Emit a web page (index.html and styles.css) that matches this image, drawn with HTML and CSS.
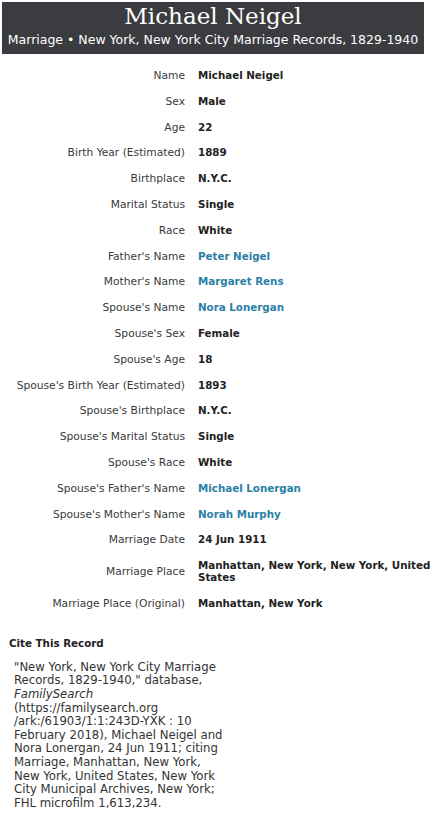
FILE: index.html
```html
<!DOCTYPE html>
<html>
<head>
<meta charset="utf-8">
<link rel="stylesheet" href="styles.css">
</head>
<body>
<header class="hdr">
  <h1 class="title">Michael Neigel</h1>
  <div class="sub">Marriage • New York, New York City Marriage Records, 1829-1940</div>
</header>
<table class="facts">
  <tr><th>Name</th><td>Michael Neigel</td></tr>
  <tr><th>Sex</th><td>Male</td></tr>
  <tr><th>Age</th><td>22</td></tr>
  <tr><th>Birth Year (Estimated)</th><td>1889</td></tr>
  <tr><th>Birthplace</th><td>N.Y.C.</td></tr>
  <tr><th>Marital Status</th><td>Single</td></tr>
  <tr><th>Race</th><td>White</td></tr>
  <tr><th>Father's Name</th><td><a class="lnk" href="#">Peter Neigel</a></td></tr>
  <tr><th>Mother's Name</th><td><a class="lnk" href="#">Margaret Rens</a></td></tr>
  <tr><th>Spouse's Name</th><td><a class="lnk" href="#">Nora Lonergan</a></td></tr>
  <tr><th>Spouse's Sex</th><td>Female</td></tr>
  <tr><th>Spouse's Age</th><td>18</td></tr>
  <tr><th>Spouse's Birth Year (Estimated)</th><td>1893</td></tr>
  <tr><th>Spouse's Birthplace</th><td>N.Y.C.</td></tr>
  <tr><th>Spouse's Marital Status</th><td>Single</td></tr>
  <tr><th>Spouse's Race</th><td>White</td></tr>
  <tr><th>Spouse's Father's Name</th><td><a class="lnk" href="#">Michael Lonergan</a></td></tr>
  <tr><th>Spouse's Mother's Name</th><td><a class="lnk" href="#">Norah Murphy</a></td></tr>
  <tr><th>Marriage Date</th><td>24 Jun 1911</td></tr>
  <tr><th>Marriage Place</th><td>Manhattan, New York, New York, United States</td></tr>
  <tr><th>Marriage Place (Original)</th><td>Manhattan, New York</td></tr>
</table>
<section class="cite">
  <h2 class="cite-h">Cite This Record</h2>
  <p class="cite-p">"New York, New York City Marriage<br>Records, 1829-1940," database,<br><i>FamilySearch</i><br>(https://familysearch.org<br>/ark:/61903/1:1:243D-YXK : 10<br>February 2018), Michael Neigel and<br>Nora Lonergan, 24 Jun 1911; citing<br>Marriage, Manhattan, New York,<br>New York, United States, New York<br>City Municipal Archives, New York;<br>FHL microfilm 1,613,234.</p>
</section>
</body>
</html>
```

FILE: styles.css
```css
body {
  margin: 0;
  background: #fff;
  font-family: "DejaVu Sans", Verdana, sans-serif;
  color: #333;
}
.hdr {
  margin: 2px 13px 0 2px;
  background: #3b3c3f;
  color: #fff;
  text-align: center;
  padding: 1px 0 6px;
}
.title {
  margin: 0;
  font-family: "DejaVu Serif", "Liberation Serif", serif;
  font-weight: normal;
  font-size: 23px;
  line-height: 26px;
}
.sub {
  font-size: 12.5px;
  line-height: 16px;
  margin-top: 3px;
}
.facts {
  margin-top: 9px;
  border-collapse: collapse;
}
.facts th {
  width: 185px;
  text-align: right;
  font-weight: normal;
  font-size: 10.7px;
  color: #3a3a3a;
  padding: 7px 6px 7px 0;
  line-height: 11.8px;
  vertical-align: middle;
  white-space: nowrap;
}
.facts td {
  font-weight: bold;
  font-size: 10.3px;
  color: #222;
  padding: 7px 0 7px 7px;
  line-height: 11.8px;
  width: 234px;
}
.lnk {
  color: #2b7fa6;
  text-decoration: none;
}
.cite {
  margin-top: 20px;
  padding-left: 9px;
}
.cite-h {
  margin: 0;
  font-size: 10.3px;
  font-weight: bold;
  color: #222;
}
.cite-p {
  margin: 12px 0 0 5px;
  white-space: nowrap;
  font-size: 11.7px;
  line-height: 13.65px;
  color: #333;
}
```
